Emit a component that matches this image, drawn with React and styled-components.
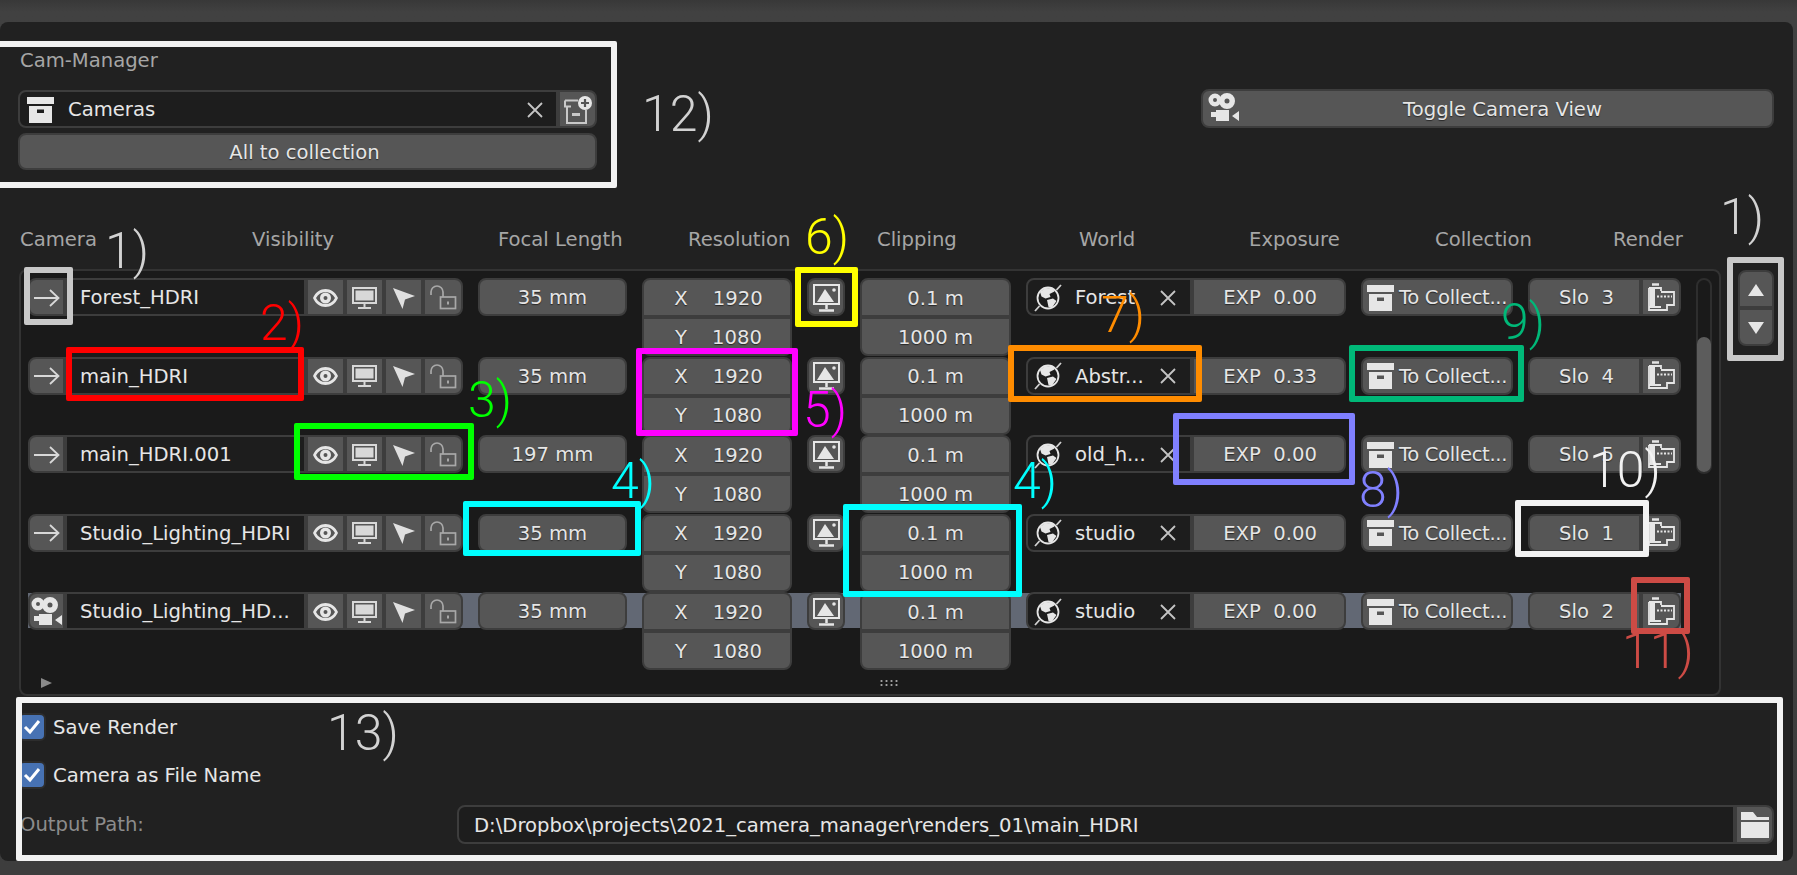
import React from "react";
import styled, { createGlobalStyle } from "styled-components";

const GlobalStyle = createGlobalStyle`
  html, body {
    margin: 0;
    width: 1797px;
    height: 875px;
    overflow: hidden;
    background: #3d3d3d;
  }
`;

const Page = styled.div`
  position: relative;
  width: 1797px;
  height: 875px;
  padding-top: 22px;
  box-sizing: border-box;
  overflow: hidden;
  background: linear-gradient(#383838, #414141 12px, #3d3d3d);
  font-family: "DejaVu Sans", sans-serif;
  font-size: 19.6px;
  color: #e6e6e6;
`;

const Panel = styled.div`
  width: 1793px;
  height: 839px;
  box-sizing: border-box;
  padding: 28px 19px 0 18px;
  background: #212121;
  border-radius: 8px;
`;

const TopArea = styled.div`
  display: flex;
  justify-content: space-between;
  align-items: flex-start;
`;

const CollectionBlock = styled.div`
  width: 579px;
`;

const PanelLabel = styled.div`
  height: 22px;
  line-height: 22px;
  color: #a6a6a6;
  margin-bottom: 18px;
  padding-left: 2px;
`;

const FieldRow = styled.div`
  display: flex;
  height: 38px;
  margin-bottom: 5px;
`;

const TextField = styled.div`
  display: flex;
  align-items: center;
  box-sizing: border-box;
  height: ${(p) => p.$h || 38}px;
  flex: ${(p) => (p.$w ? `0 0 ${p.$w}px` : "1")};
  padding-left: ${(p) => p.$pad || 13}px;
  padding-top: 1px;
  background: #1d1d1d;
  border: 2px solid #3d3d3d;
  border-radius: ${(p) => p.$radius || "0"};
  white-space: nowrap;
  overflow: hidden;
`;

const FieldText = styled.span`
  flex: 1;
  padding-left: ${(p) => p.$pad}px;
`;

const ClearBtn = styled.span`
  display: flex;
  margin-right: ${(p) => p.$mr}px;
`;

const Button = styled.div`
  display: flex;
  align-items: center;
  justify-content: center;
  gap: ${(p) => p.$gap || 0}px;
  box-sizing: border-box;
  height: ${(p) => p.$h || 38}px;
  width: ${(p) => (p.$w ? `${p.$w}px` : "auto")};
  flex: ${(p) => (p.$w ? `0 0 ${p.$w}px` : "none")};
  padding-top: 1px;
  padding-left: ${(p) => p.$pl || 0}px;
  padding-right: ${(p) => p.$pr || 0}px;
  background: #565656;
  border: 2px solid #3d3d3d;
  border-radius: ${(p) => p.$radius || "8px"};
  text-shadow: 0 1px 1px rgba(0, 0, 0, 0.55);
  white-space: pre;
`;

const ToggleButton = styled(Button)`
  position: relative;
  width: 573px;
  margin-top: 39px;
`;

const ToggleIcon = styled.span`
  position: absolute;
  left: 5px;
  top: 2px;
  display: flex;
`;

const HeaderRow = styled.div`
  display: flex;
  height: 22px;
  line-height: 22px;
  margin-top: 59px;
  padding-left: 2px;
  color: #a6a6a6;
`;

const ColTitle = styled.div`
  flex: 0 0 ${(p) => p.$w}px;
  white-space: nowrap;
`;

const Body = styled.div`
  display: flex;
  margin-top: 18px;
`;

const List = styled.div`
  display: flex;
  box-sizing: border-box;
  width: 1702px;
  height: 427px;
  margin-left: 1px;
  padding: 7px 0 0 7px;
  background: #1a1a1a;
  border: 2px solid #333;
  border-radius: 8px;
`;

const Rows = styled.div`
  width: 1653px;
`;

const Row = styled.div`
  display: flex;
  align-items: flex-start;
  height: 78.5px;
  background: ${(p) =>
    p.$active
      ? "linear-gradient(#626874, #626874) 0 1px / 100% 35px no-repeat"
      : "none"};
`;

const VisGroup = styled.div`
  display: flex;
  margin-right: 15px;
`;

const VisBtn = styled(Button)`
  width: ${(p) => (p.$last ? 40 : 39)}px;
  flex: 0 0 ${(p) => (p.$last ? 40 : 39)}px;
  border-radius: ${(p) => (p.$last ? "0 8px 8px 0" : "0")};
`;

const Stack = styled.div`
  display: flex;
  flex-direction: column;
  flex: 0 0 ${(p) => p.$w}px;
  margin-right: 15px;
`;

const StackCell = styled(Button)`
  height: 39px;
  border-radius: ${(p) => (p.$top ? "8px 8px 0 0" : "0 0 8px 8px")};
`;

const AxisCell = styled(StackCell)`
  gap: 25px;
  padding-left: 3px;
`;

const CollectText = styled.span`
  letter-spacing: -0.35px;
  margin-left: 2px;
`;

const ListFooter = styled.div`
  display: flex;
  align-items: center;
  height: 22px;
  margin-top: 1px;
`;

const ExpandArrow = styled.span`
  width: 0;
  height: 0;
  margin-left: 13px;
  border-left: 11px solid #8a8a8a;
  border-top: 5px solid transparent;
  border-bottom: 5px solid transparent;
`;

const Grip = styled.span`
  width: 19px;
  height: 8px;
  margin-left: 827px;
  background-image: radial-gradient(circle, #a0a0a0 1px, transparent 1.2px);
  background-size: 5px 4px;
`;

const ScrollTrack = styled.div`
  box-sizing: border-box;
  width: 16px;
  height: 196px;
  margin-left: 15px;
  padding-top: 57px;
  border: 2px solid #2e2e2e;
  border-radius: 8px;
`;

const ScrollThumb = styled.div`
  height: 100%;
  margin: 0 -1px;
  background: #5c5c5c;
  border-radius: 7px;
`;

const SideArrows = styled.div`
  display: flex;
  flex-direction: column;
  width: 36px;
  margin: 1px 0 0 17px;
`;

const SideBtn = styled(Button)`
  height: 38px;
  border-radius: ${(p) => (p.$top ? "8px 8px 0 0" : "0 0 8px 8px")};
`;

const Triangle = styled.span`
  width: 0;
  height: 0;
  border-left: 8px solid transparent;
  border-right: 8px solid transparent;
  border-${(p) => (p.$up ? "bottom" : "top")}: 12px solid #e6e6e6;
`;

const CheckRow = styled.div`
  display: flex;
  align-items: center;
  gap: 7px;
  height: 28px;
  margin-top: ${(p) => p.$mt}px;
`;

const CheckBox = styled.span`
  display: flex;
  align-items: center;
  justify-content: center;
  box-sizing: border-box;
  width: 28px;
  height: 28px;
  background: #4772b3;
  border: 2px solid #2d2d2d;
  border-radius: 6px;
`;

const PathRow = styled.div`
  display: flex;
  align-items: center;
  height: 39px;
  margin-top: 16px;
`;

const PathLabel = styled.div`
  flex: 0 0 439px;
  color: #8c8c8c;
  padding-left: 2px;
  box-sizing: border-box;
`;

const PathField = styled(TextField)`
  padding-left: 15px;
`;

const Frame = styled.div`
  position: absolute;
  box-sizing: border-box;
  left: ${(p) => p.$x}px;
  top: ${(p) => p.$y}px;
  width: ${(p) => p.$w}px;
  height: ${(p) => p.$h}px;
  border: 6px solid ${(p) => p.$c};
  border-radius: 2px;
`;

const Note = styled.div`
  position: absolute;
  left: ${(p) => p.$x}px;
  top: ${(p) => p.$y - 7}px;
  color: ${(p) => p.$c};
  font-family: Roboto, "Liberation Sans", sans-serif;
  font-weight: 300;
  font-size: 50px;
  line-height: 50px;
  white-space: nowrap;
`;

const BoxIcon = () => (
  <svg width="27" height="26" viewBox="0 0 27 26" fill="#e6e6e6">
    <rect width="27" height="7" />
    <path fillRule="evenodd" d="M2 9h23v17H2zM10 12.5v3.5h7v-3.5z" />
  </svg>
);

const NewBoxIcon = () => (
  <svg width="30" height="30" viewBox="0 0 30 30" fill="none">
    <path d="M2 5.500h13M2 5.500v6h6M4 11.500V28h19V15" stroke="#c8c8c8" strokeWidth="2" />
    <rect x="9" y="18" width="8" height="3" fill="#c8c8c8" />
    <circle cx="22" cy="8" r="7" fill="#e6e6e6" />
    <path d="M22 4v8M18 8h8" stroke="#555" strokeWidth="2.200" />
  </svg>
);

const CloseIcon = ({ size = 18 }) => (
  <svg width={size} height={size} viewBox="0 0 18 18" stroke="#c4c4c4" strokeWidth="1.800">
    <path d="M2 2l14 14M16 2L2 16" />
  </svg>
);

const ArrowIcon = () => (
  <svg width="26" height="18" viewBox="0 0 26 18" fill="none" stroke="#d8d8d8" strokeWidth="1.800">
    <path d="M0 9h24M16 1l8.500 8-8.500 8" />
  </svg>
);

const EyeIcon = () => (
  <svg width="25" height="18" viewBox="0 0 25 18" fill="#e6e6e6">
    <path
      fillRule="evenodd"
      d="M0 9C5-3 20-3 25 9 20 21 5 21 0 9zM3 9c4 8 15 8 19 0C18 1 7 1 3 9z"
    />
    <path
      fillRule="evenodd"
      d="M12.500 3.500a5.500 5.500 0 1 1 0 11 5.500 5.500 0 0 1 0-11zM12.500 7a2 2 0 1 0 0 4 2 2 0 0 0 0-4z"
    />
  </svg>
);

const MonitorIcon = () => (
  <svg width="25" height="22" viewBox="0 0 25 22">
    <rect x="1" y="1" width="23" height="15" fill="none" stroke="#d8d8d8" strokeWidth="2" />
    <rect x="3.500" y="3.500" width="18" height="10" fill="#d8d8d8" />
    <path d="M12.500 16v4M6 21h13" stroke="#d8d8d8" strokeWidth="2" />
  </svg>
);

const CursorIcon = () => (
  <svg width="22" height="22" viewBox="0 0 22 22" fill="#e0e0e0">
    <path d="M0 1l22 8-10 3.500L9.500 22z" />
  </svg>
);

const LockIcon = () => (
  <svg width="27" height="25" viewBox="0 0 27 25" fill="none" stroke="#a8a8a8" strokeWidth="1.700">
    <path d="M1 10V7a6 6 0 0 1 12 0v5" />
    <rect x="10.500" y="12" width="15" height="11.500" />
    <rect x="17" y="16.500" width="2" height="3" fill="#a8a8a8" stroke="none" />
  </svg>
);

const CameraIcon = () => (
  <svg width="32" height="30" viewBox="0 0 32 30" fill="#e6e6e6">
    <path
      fillRule="evenodd"
      d="M7 0.500a6.500 6.500 0 1 1 0 13 6.500 6.500 0 0 1 0-13zM7 5a2 2 0 1 0 0 4 2 2 0 0 0 0-4z"
    />
    <path
      fillRule="evenodd"
      d="M19 0a8 8 0 1 1 0 16 8 8 0 0 1 0-16zM19 5.500a2.500 2.500 0 1 0 0 5 2.500 2.500 0 0 0 0-5z"
    />
    <path d="M8 17h13v11H8v-4H3v-5h5zM24 23l7-5v10z" />
  </svg>
);

const RenderSizeIcon = () => (
  <svg width="27" height="28" viewBox="0 0 27 28">
    <rect x="1" y="1" width="25" height="19" fill="none" stroke="#e6e6e6" strokeWidth="2" />
    <path d="M4 18L12 5l9 13z" fill="#e6e6e6" />
    <circle cx="21" cy="6" r="1.800" fill="#e6e6e6" />
    <path d="M13.500 20v5M6 26.500h15" stroke="#e6e6e6" strokeWidth="2.500" />
  </svg>
);

const WorldIcon = () => (
  <svg width="28" height="28" viewBox="0 0 28 28">
    <circle cx="14" cy="14" r="10.500" fill="none" stroke="#e6e6e6" strokeWidth="1.800" />
    <path
      d="M6 8l5-4 8 .5 1.500 3-5 2.500 1 3-5 1.500-4-2zM13 16l6-1.500 3.500 2.500-4.500 6.500-3.500-.5z"
      fill="#e6e6e6"
    />
    <path d="M22.500 6L27 1M5.500 22L1 27" stroke="#d0d0d0" strokeWidth="1.800" />
  </svg>
);

const RenderIcon = () => (
  <svg width="27" height="30" viewBox="0 0 27 30" fill="none" stroke="#e6e6e6" strokeWidth="1.800">
    <path d="M4 1.500h7" strokeWidth="2.500" />
    <path d="M1 5h12v3M1 5v22h12M1 24h12" />
    <rect x="2" y="6" width="5" height="17" fill="#e6e6e6" stroke="none" />
    <path d="M13 9h13v13h-7v5h-6" />
    <path d="M9 13.500h15" strokeDasharray="2 1.500" strokeWidth="2" />
  </svg>
);

const FolderIcon = () => (
  <svg width="28" height="26" viewBox="0 0 28 26" fill="#e6e6e6">
    <path d="M0 0h12l4 5h12v3H0z" />
    <rect y="10" width="28" height="16" />
  </svg>
);

const CheckIcon = () => (
  <svg width="18" height="16" viewBox="0 0 18 16" fill="none" stroke="#fff" strokeWidth="3">
    <path d="M2 8l5 5 9-11" />
  </svg>
);

const cameras = [
  { name: "Forest_HDRI", focal: "35 mm", world: "Forest", exp: "0.00", slot: 3 },
  { name: "main_HDRI", focal: "35 mm", world: "Abstr...", exp: "0.33", slot: 4 },
  { name: "main_HDRI.001", focal: "197 mm", world: "old_h...", exp: "0.00", slot: 5 },
  { name: "Studio_Lighting_HDRI", focal: "35 mm", world: "studio", exp: "0.00", slot: 1 },
  { name: "Studio_Lighting_HD...", focal: "35 mm", world: "studio", exp: "0.00", slot: 2, active: true },
];

const titles = [
  ["Camera", 232],
  ["Visibility", 246],
  ["Focal Length", 190],
  ["Resolution", 189],
  ["Clipping", 202],
  ["World", 170],
  ["Exposure", 186],
  ["Collection", 178],
  ["Render", 100],
];

const frames = [
  [-6, 41, 623, 147, "#f2f2f2"],
  [24, 267, 49, 58, "#c8c8c8"],
  [66, 347, 238, 54, "#ff0000"],
  [294, 423, 180, 57, "#00ff00"],
  [463, 501, 178, 55, "#00ffff"],
  [843, 504, 179, 93, "#00ffff"],
  [636, 348, 162, 88, "#ff00ff"],
  [795, 267, 63, 60, "#ffff00"],
  [1008, 345, 194, 57, "#ff8c00"],
  [1173, 413, 182, 72, "#8080ff"],
  [1349, 345, 175, 57, "#00b878"],
  [1515, 500, 134, 57, "#f2f2f2"],
  [1631, 577, 59, 57, "#cd4b45"],
  [1727, 257, 57, 104, "#c8c8c8"],
  [16, 697, 1767, 164, "#f2f2f2"],
];

const notes = [
  ["12)", 642, 96, "#d2d2d2"],
  ["1)", 105, 233, "#d2d2d2"],
  ["2)", 260, 305, "#ff0000"],
  ["3)", 468, 382, "#00ff00"],
  ["4)", 611, 463, "#00ffff"],
  ["4)", 1013, 463, "#00ffff"],
  ["5)", 803, 392, "#ff00ff"],
  ["6)", 805, 219, "#ffff00"],
  ["7)", 1101, 297, "#ff8c00"],
  ["8)", 1359, 472, "#8080ff"],
  ["9)", 1501, 304, "#00b878"],
  ["10)", 1589, 452, "#f2f2f2"],
  ["11)", 1622, 633, "#cd4b45"],
  ["1)", 1720, 199, "#d2d2d2"],
  ["13)", 327, 715, "#d2d2d2"],
];

function CameraRow({ cam }) {
  return (
    <Row $active={cam.active}>
      <Button $w={37} $radius="8px 0 0 8px">
        {cam.active ? <CameraIcon /> : <ArrowIcon />}
      </Button>
      <TextField $w={241}>{cam.name}</TextField>
      <VisGroup>
        <VisBtn><EyeIcon /></VisBtn>
        <VisBtn><MonitorIcon /></VisBtn>
        <VisBtn><CursorIcon /></VisBtn>
        <VisBtn $last><LockIcon /></VisBtn>
      </VisGroup>
      <Stack $w={149}>
        <Button>{cam.focal}</Button>
      </Stack>
      <Stack $w={150}>
        <AxisCell $top>
          <span>X</span>
          <span>1920</span>
        </AxisCell>
        <AxisCell>
          <span>Y</span>
          <span>1080</span>
        </AxisCell>
      </Stack>
      <Stack $w={38}>
        <Button><RenderSizeIcon /></Button>
      </Stack>
      <Stack $w={151}>
        <StackCell $top>0.1 m</StackCell>
        <StackCell>1000 m</StackCell>
      </Stack>
      <TextField $w={166} $pad={6} $radius="8px 0 0 8px">
        <WorldIcon />
        <FieldText $pad={13}>{cam.world}</FieldText>
        <ClearBtn $mr={13}><CloseIcon /></ClearBtn>
      </TextField>
      <Stack $w={154}>
        <Button $pl={2} $radius="0 8px 8px 0">EXP  {cam.exp}</Button>
      </Stack>
      <Stack $w={152}>
        <Button $gap={3}>
          <BoxIcon />
          <CollectText>To Collect...</CollectText>
        </Button>
      </Stack>
      <Button $w={113} $pl={4} $radius="8px 0 0 8px">Slo  {cam.slot}</Button>
      <Button $w={40} $radius="0 8px 8px 0"><RenderIcon /></Button>
    </Row>
  );
}

export default function App() {
  return (
    <Page>
      <GlobalStyle />
      <Panel>
        <TopArea>
          <CollectionBlock>
            <PanelLabel>Cam-Manager</PanelLabel>
            <FieldRow>
              <TextField $h={38} $pad={7} $radius="8px 0 0 8px">
                <BoxIcon />
                <FieldText $pad={14}>Cameras</FieldText>
                <ClearBtn $mr={12}><CloseIcon /></ClearBtn>
              </TextField>
              <Button $w={39} $h={38} $radius="0 8px 8px 0"><NewBoxIcon /></Button>
            </FieldRow>
            <Button $h={37} $pr={6}>All to collection</Button>
          </CollectionBlock>
          <ToggleButton $h={39} $pl={30}>
            <ToggleIcon><CameraIcon /></ToggleIcon>
            Toggle Camera View
          </ToggleButton>
        </TopArea>

        <HeaderRow>
          {titles.map(([label, w]) => (
            <ColTitle key={label} $w={w}>{label}</ColTitle>
          ))}
        </HeaderRow>

        <Body>
          <List>
            <Rows>
              {cameras.map((cam) => (
                <CameraRow key={cam.name} cam={cam} />
              ))}
              <ListFooter>
                <ExpandArrow />
                <Grip />
              </ListFooter>
            </Rows>
            <ScrollTrack>
              <ScrollThumb />
            </ScrollTrack>
          </List>
          <SideArrows>
            <SideBtn $top><Triangle $up /></SideBtn>
            <SideBtn><Triangle /></SideBtn>
          </SideArrows>
        </Body>

        <CheckRow $mt={17}>
          <CheckBox><CheckIcon /></CheckBox>
          Save Render
        </CheckRow>
        <CheckRow $mt={20}>
          <CheckBox><CheckIcon /></CheckBox>
          Camera as File Name
        </CheckRow>
        <PathRow>
          <PathLabel>Output Path:</PathLabel>
          <PathField $h={39} $radius="8px 0 0 8px">
            D:\Dropbox\projects\2021_camera_manager\renders_01\main_HDRI
          </PathField>
          <Button $w={39} $h={39} $radius="0 8px 8px 0"><FolderIcon /></Button>
        </PathRow>
      </Panel>

      {frames.map(([x, y, w, h, c]) => (
        <Frame key={`${x}-${y}`} $x={x} $y={y} $w={w} $h={h} $c={c} />
      ))}
      {notes.map(([text, x, y, c]) => (
        <Note key={`${text}-${x}`} $x={x} $y={y} $c={c}>{text}</Note>
      ))}
    </Page>
  );
}
